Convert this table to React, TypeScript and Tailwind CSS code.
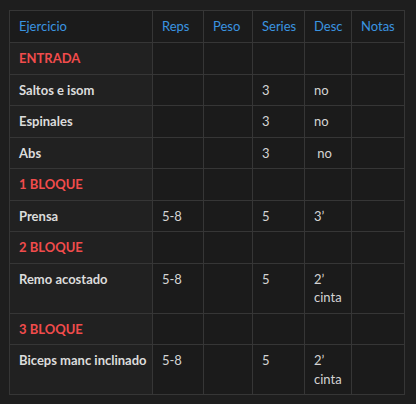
const rows: { cells: string[]; section?: boolean }[] = [
  { cells: ["ENTRADA", "", "", "", "", ""], section: true },
  { cells: ["Saltos e isom", "", "", "3", "no", ""] },
  { cells: ["Espinales", "", "", "3", "no", ""] },
  { cells: ["Abs", "", "", "3", "\u00a0no", ""] },
  { cells: ["1 BLOQUE", "", "", "", "", ""], section: true },
  { cells: ["Prensa", "5-8", "", "5", "3’", ""] },
  { cells: ["2 BLOQUE", "", "", "", "", ""], section: true },
  { cells: ["Remo acostado", "5-8", "", "5", "2’ cinta", ""] },
  { cells: ["3 BLOQUE", "", "", "", "", ""], section: true },
  { cells: ["Biceps manc inclinado", "5-8", "", "5", "2’ cinta", ""] },
];

const headers = ["Ejercicio", "Reps", "Peso", "Series", "Desc", "Notas"];
const widths = ["w-[143px]", "w-[51px]", "w-[49px]", "w-[52px]", "w-[47px]", "w-[53px]"];

export default function App() {
  return (
    <div
      className="min-h-[404px] w-[416px] bg-[#1e1e1e] pt-[10px] pl-[9px] text-[13px] leading-[18.5px] text-[#cccccc]"
      style={{ fontFamily: 'Lato, "Noto Sans", sans-serif' }}
    >
      <table className="w-[396px] table-fixed border-collapse bg-[#1b1b1b]">
        <colgroup>
          {widths.map((w, i) => (
            <col key={i} className={w} />
          ))}
        </colgroup>
        <thead>
          <tr>
            {headers.map((h) => (
              <th
                key={h}
                className="h-[32px] border border-[#363636] px-[9px] py-[6px] text-left font-normal text-[#3a94e0]"
              >
                {h}
              </th>
            ))}
          </tr>
        </thead>
        <tbody>
          {rows.map((r, ri) => (
            <tr key={ri}>
              {r.cells.map((c, ci) => (
                <td
                  key={ci}
                  className={`border border-[#363636] px-[9px] py-[6px] align-top ${
                    ci === 0 ? "whitespace-nowrap bg-[#212121] font-bold" : "text-[#d4d4d4]"
                  } ${ci === 0 ? (r.section ? "text-[#f14c4c]" : "text-[#dcdcdc]") : ""}`}
                >
                  {c === "" ? "\u00a0" : c}
                </td>
              ))}
            </tr>
          ))}
        </tbody>
      </table>
    </div>
  );
}
